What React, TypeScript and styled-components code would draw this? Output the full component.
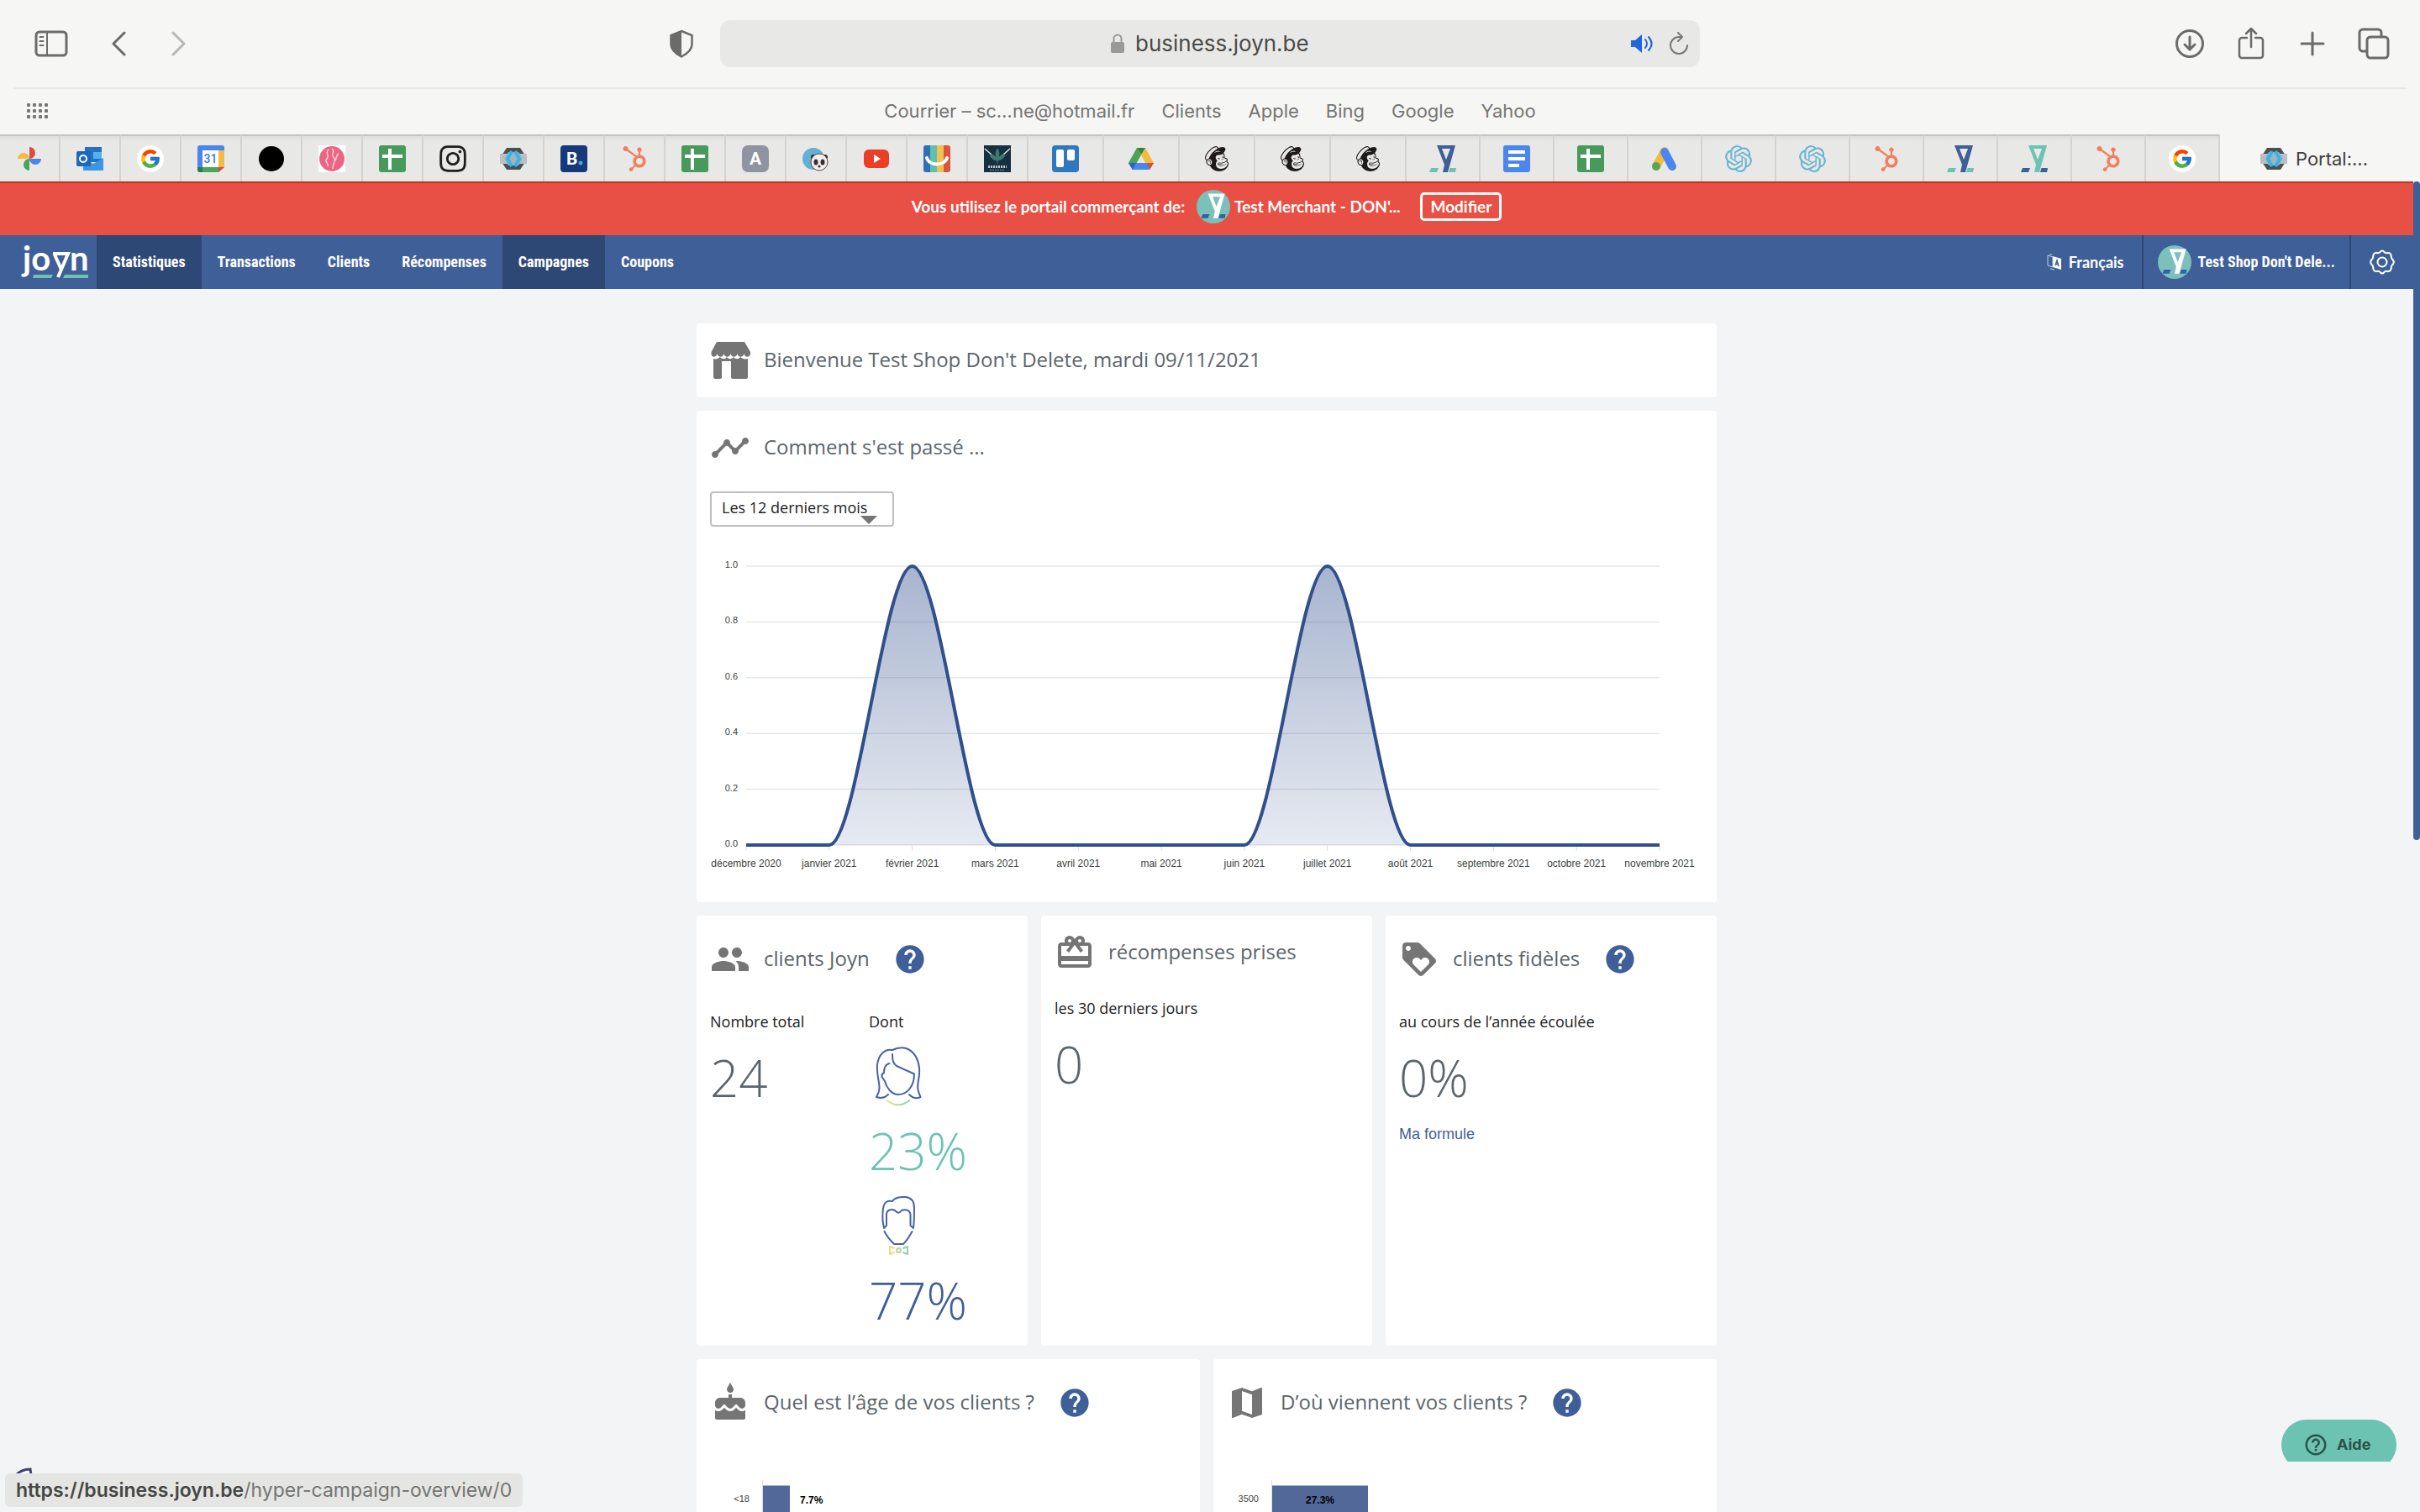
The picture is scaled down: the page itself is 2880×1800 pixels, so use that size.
import React from "react";
import styled, { createGlobalStyle } from "styled-components";
import { MdTimeline, MdPeople, MdCardGiftcard, MdLoyalty, MdCake, MdMap, MdHelp, MdHelpOutline } from "react-icons/md";
import { FaHubspot, FaMailchimp, FaInstagram } from "react-icons/fa";
import { FcGoogle } from "react-icons/fc";
import { SiOpenai } from "react-icons/si";

const color = {
  chrome: "#f6f6f4",
  chromeDark: "#e8e8e6",
  chromeIcon: "#6b6b69",
  blue: "#3f5f98",
  blueDark: "#2e4876",
  red: "#e85045",
  teal: "#6cc3b1",
  page: "#f3f4f6",
  grey: "#757575",
  title: "#5c656b",
  text: "#212121",
};

const font = {
  ui: 'Inter, "Liberation Sans", sans-serif',
  nav: '"Liberation Sans Narrow", "Roboto Condensed", "Liberation Sans", sans-serif',
  lato: 'Lato, "Liberation Sans", sans-serif',
  body: '"Open Sans", "Noto Sans", sans-serif',
  chart: '"Liberation Sans", Arial, sans-serif',
};

const Global = createGlobalStyle`
  *, *::before, *::after { box-sizing: border-box; }
  body { margin: 0; overflow: hidden; background: ${color.page}; font-family: ${font.body}; }
  h1, h2, p { margin: 0; font-weight: 400; }
  button { font: inherit; color: inherit; border: 0; padding: 0; background: none; cursor: pointer; }
  a { color: inherit; text-decoration: none; }
  svg { display: block; flex: none; }
`;

const Window = styled.div`
  height: 100vh;
  display: flex;
  flex-direction: column;
  overflow: hidden;
`;

/* ---------- browser chrome ---------- */

const Toolbar = styled.header`
  display: grid;
  grid-template-columns: minmax(0, 1fr) minmax(0, 1166px) minmax(0, 1fr);
  align-items: center;
  height: 104px;
  flex: none;
  background: ${color.chrome};
  color: ${color.chromeIcon};
`;

const ToolbarSide = styled.div<{ $end?: boolean }>`
  display: flex;
  align-items: center;
  gap: ${(p) => (p.$end ? 33 : 32)}px;
  justify-content: ${(p) => (p.$end ? "flex-end" : "flex-start")};
  padding: ${(p) => (p.$end ? "0 35px 0 0" : "0 26px 0 41px")};
`;

const ToolButton = styled.button<{ $faded?: boolean; $push?: boolean }>`
  width: 40px;
  height: 40px;
  display: grid;
  place-items: center;
  opacity: ${(p) => (p.$faded ? 0.45 : 1)};
  margin-left: ${(p) => (p.$push ? "auto" : "0")};
`;

const HistoryButtons = styled.div`
  display: flex;
  gap: 32px;
  padding-left: 8px;
`;

const AddressBar = styled.div`
  display: grid;
  grid-template-columns: 1fr auto 1fr;
  align-items: center;
  height: 56px;
  border-radius: 12px;
  background: ${color.chromeDark};
`;

const AddressLabel = styled.label`
  grid-column: 2;
  display: flex;
  align-items: center;
  gap: 12px;
  color: #999997;
`;

const AddressInput = styled.input`
  width: 208px;
  border: 0;
  padding: 0;
  background: none;
  font: 400 26px/32px ${font.ui};
  color: #4a4a48;
  outline: none;
`;

const AddressTools = styled.div`
  display: flex;
  justify-content: flex-end;
  align-items: center;
  gap: 18px;
  padding-right: 13px;
`;

const Bookmarks = styled.nav`
  display: grid;
  grid-template-columns: 1fr auto 1fr;
  align-items: center;
  height: 56px;
  flex: none;
  padding: 0 16px;
  background: linear-gradient(#e8e8e7, #e8e8e7) center top / calc(100% - 32px) 2px no-repeat ${color.chrome};
`;

const BookmarkList = styled.div`
  display: flex;
  gap: 32px;
  font: 400 22px/28px ${font.ui};
  color: #757573;
`;

const DotsButton = styled.button`
  justify-self: start;
  padding: 8px 16px;
`;

const TabStrip = styled.div`
  display: flex;
  height: 56px;
  flex: none;
  background: ${color.chrome};
`;

const Tab = styled.button<{ $width: number }>`
  flex: 0 1 ${(p) => p.$width}px;
  display: grid;
  place-items: center;
  border-right: 2px solid #d3d3d1;
  border-top: 2px solid #c4c5c3;
  background: linear-gradient(#dededc, ${color.chromeDark} 6px);
`;

const ActiveTab = styled.button`
  flex: 1 1 0;
  display: flex;
  align-items: center;
  justify-content: center;
  gap: 10px;
  padding: 2px 14px 0 0;
  font: 400 22px/28px ${font.ui};
  color: #3f3f3e;
`;

/* ---------- portal ---------- */

const Viewport = styled.div`
  flex: 1;
  min-height: 0;
  display: flex;
`;

const Portal = styled.div`
  flex: 1;
  min-width: 0;
  display: flex;
  flex-direction: column;
`;

const ScrollTrack = styled.div`
  width: 8px;
  flex: none;
  background: ${color.page};
`;

const ScrollThumb = styled.div`
  height: 49.5%;
  border-radius: 4px;
  background: ${color.blue};
`;

const Banner = styled.div`
  display: flex;
  align-items: center;
  justify-content: center;
  height: 64px;
  flex: none;
  padding-bottom: 6px;
  border-top: 2px solid #c5301f;
  background: ${color.red};
  color: #fff;
  font: 700 19px/24px ${font.lato};
`;

const BannerMerchant = styled.div`
  display: flex;
  align-items: center;
  gap: 5px;
  margin: 0 24px 0 14px;
`;

const EditButton = styled.button`
  height: 34px;
  padding: 0 9px;
  border: 3px solid #fff;
  border-radius: 5px;
`;

const NavBar = styled.nav`
  display: flex;
  align-items: stretch;
  height: 64px;
  flex: none;
  background: ${color.blue};
  color: #fff;
`;

const Brand = styled.a`
  display: flex;
  align-items: center;
  padding: 0 10px 0 25px;
`;

const NavLink = styled.a<{ $active?: boolean }>`
  display: flex;
  align-items: center;
  padding: 0 19px;
  font: 700 18px/24px ${font.nav};
  background: ${(p) => (p.$active ? color.blueDark : "transparent")};
`;

const NavEnd = styled.div`
  display: flex;
  margin-left: auto;
`;

const NavAction = styled.button<{ $divided?: boolean; $narrow?: boolean }>`
  display: flex;
  align-items: center;
  gap: 8px;
  padding: 0 ${(p) => (p.$narrow ? 17 : 21)}px;
  border-left: ${(p) => (p.$divided ? `2px solid ${color.blueDark}` : "0")};
  font: 700 18px/24px ${(p) => (p.$narrow ? font.nav : font.lato)};
`;

const Main = styled.main`
  flex: 1;
  min-height: 0;
  overflow: hidden;
  padding: 41px 16px 0;
`;

const Dashboard = styled.div`
  display: flex;
  flex-direction: column;
  gap: 16px;
  max-width: 1214px;
  margin: 0 auto;
`;

const CardRow = styled.div<{ $columns: number }>`
  display: grid;
  grid-template-columns: repeat(${(p) => p.$columns}, minmax(0, 1fr));
  gap: 16px;
`;

const Card = styled.section`
  padding: 20px 16px;
  border-radius: 4px;
  background: #fff;
`;

const CardHeader = styled.div<{ $tall?: boolean }>`
  display: flex;
  align-items: center;
  gap: 16px;
  height: ${(p) => (p.$tall ? 64 : 48)}px;
  color: ${color.grey};
`;

const CardTitle = styled.h2`
  padding-bottom: 2px;
  font: 400 24px/32px ${font.body};
  color: ${color.title};
`;

const HelpButton = styled.button`
  margin-left: 12px;
  color: ${color.blue};
`;

const PeriodField = styled.label`
  position: relative;
  display: block;
  width: 219px;
  margin: 28px 0 16px;
`;

const PeriodSelect = styled.select`
  appearance: none;
  display: block;
  width: 100%;
  height: 42px;
  padding: 0 12px 4px;
  border: 2px solid #bfbfbf;
  border-radius: 4px;
  background: #fff;
  font: 400 18px/24px ${font.body};
  color: ${color.text};
`;

const PeriodArrow = styled.span`
  position: absolute;
  right: 20px;
  bottom: 3px;
  border: 10px solid transparent;
  border-bottom: 0;
  border-top-color: ${color.grey};
  pointer-events: none;
`;

const StatGrid = styled.div`
  display: grid;
  grid-template-columns: 1fr 1fr;
  gap: 16px;
`;

const StatLabel = styled.p`
  margin-top: 30px;
  font: 400 18px/24px ${font.body};
  color: ${color.text};
`;

const StatValue = styled.p<{ $color?: string }>`
  font: 300 60px/72px ${font.body};
  color: ${(p) => p.$color || color.title};
`;

const BigStat = styled(StatValue)`
  margin-top: 19px;
`;

const GenderStat = styled.div`
  height: 178px;
`;

const GenderValue = styled(StatValue)`
  margin-top: 17px;
`;

const GenderList = styled.div`
  height: 354px;
  padding-top: 18px;
`;

const FormulaLink = styled.a`
  display: inline-block;
  margin-top: 19px;
  font: 400 18px/24px ${font.chart};
  color: ${color.blue};
`;

const BarChart = styled.div<{ $axis: number }>`
  display: grid;
  grid-template-columns: ${(p) => p.$axis}px 1fr;
  height: 160px;
  margin-top: 60px;
`;

const BarName = styled.span`
  padding: 14px 15px 0 0;
  text-align: right;
  font: 400 11px/16px ${font.chart};
  color: #444;
`;

const BarArea = styled.div`
  display: flex;
  align-items: flex-start;
  padding-top: 6px;
  border-left: 1px solid #dcdde0;
  font: 700 12px/16px ${font.chart};
  color: #000;
`;

const Bar = styled.div<{ $width: number }>`
  width: ${(p) => p.$width}px;
  height: 60px;
  padding-top: 9px;
  text-align: center;
  border-top: 1px solid #a9b4cf;
  background: #516899;
`;

const BarValue = styled.span`
  padding: 10px 0 0 12px;
`;

const StatusBubble = styled.div`
  position: fixed;
  left: 6px;
  bottom: 6px;
  padding: 4px 13px;
  border-radius: 6px;
  background: #e5e6e4;
  font: 400 23px/32px ${font.ui};
  color: #737472;
  strong { font-weight: 600; color: #454745; }
`;

const StrokeHint = styled.svg`
  position: fixed;
  left: 16px;
  bottom: 44px;
`;

const HelpClip = styled.div`
  position: fixed;
  right: 28px;
  bottom: 60px;
  height: 50px;
  overflow: hidden;
`;

const HelpWidget = styled.button`
  display: flex;
  align-items: center;
  gap: 10px;
  width: 137px;
  height: 60px;
  padding: 0 0 0 26px;
  border-radius: 30px;
  background: ${color.teal};
  font: 700 18px/24px ${font.ui};
  color: #2b5249;
`;

/* ---------- drawings ---------- */

const Mark = ({ size = 32, main = color.blue, dash = color.teal, disc = "" }: { size?: number; main?: string; dash?: string; disc?: string }) => (
  <svg width={size} height={size} viewBox={disc ? "-6 -5 44 44" : "0 0 32 32"}>
    {disc && <circle cx="16" cy="17" r="22" fill={disc} />}
    <path fill={main} fillRule="evenodd" d="M9 0H31L22 32H16L18 23ZM15 4L20 17L25 4Z" />
    <path fill={dash} d="M2 27H11L9 32H0ZM24.500 27H32L31 32H23Z" />
  </svg>
);

const Sheets = () => (
  <svg width="32" height="32" viewBox="0 0 32 32">
    <rect width="32" height="32" rx="3" fill="#48995c" />
    <path d="M13 4v25M4 13h24" stroke="#fff" strokeWidth="4" />
  </svg>
);

const Hex = () => (
  <svg width="32" height="32" viewBox="0 0 32 32">
    <path d="M8 3H24L30 12V20L24 29H8L2 20V12Z" fill="#4b4f52" />
    <rect x="0" y="10" width="32" height="12" fill="#b9c0c4" />
    <path d="M10 8H22L27 16L22 24H10L5 16Z" fill="#9fb4bf" />
    <path d="M14 7L9 16L14 25M18 7L23 16L18 25" stroke="#38b5e6" strokeWidth="4" fill="none" />
  </svg>
);

const Photos = () => (
  <svg width="32" height="32" viewBox="0 0 32 32">
    <path d="M16 2a7 7 0 0 1 0 14Z" fill="#dd4b3e" />
    <path d="M30 16a7 7 0 0 1-14 0Z" fill="#4a86ee" />
    <path d="M16 30a7 7 0 0 1 0-14Z" fill="#4aa45a" />
    <path d="M2 16a7 7 0 0 1 14 0Z" fill="#f3bb41" />
  </svg>
);

const Outlook = () => (
  <svg width="32" height="32" viewBox="0 0 32 32">
    <path d="M10 2h20v18H10z" fill="#2a6fc0" />
    <path d="M20 8h10v8H20z" fill="#4fb4ee" />
    <path d="M8 15l12 7 12-7v15H8z" fill="#3b96e4" />
    <rect y="7" width="17" height="18" rx="2" fill="#1d67bd" />
    <circle cx="8" cy="16" r="4" stroke="#fff" strokeWidth="2" fill="none" />
  </svg>
);

const Google = () => (
  <svg width="32" height="32" viewBox="0 0 32 32">
    <circle cx="16" cy="16" r="16" fill="#fff" />
    <FcGoogle x="3" y="3" size={26} />
  </svg>
);

const Calendar = () => (
  <svg width="32" height="32" viewBox="0 0 32 32">
    <rect width="32" height="32" rx="3" fill="#4a86ee" />
    <path d="M25 6h7v20h-7z" fill="#f3bb41" />
    <path d="M6 26h19v6H9a3 3 0 0 1-3-3z" fill="#4aa45a" />
    <path d="M0 26h6v6H3a3 3 0 0 1-3-3z" fill="#2f7d45" />
    <path d="M32 26v6h-7z" fill="#e8e8e6" />
    <path d="M25 26h7l-7 6z" fill="#dd4b3e" />
    <rect x="6" y="6" width="19" height="20" fill="#fff" />
    <text x="15.500" y="21" textAnchor="middle" fontFamily="Roboto" fontSize="14" fontWeight="500" fill="#3f7ae0">31</text>
  </svg>
);

const Disc = () => (
  <svg width="32" height="32" viewBox="0 0 32 32"><circle cx="16" cy="16" r="15" /></svg>
);

const PinkBrain = () => (
  <svg width="32" height="32" viewBox="0 0 32 32">
    <rect width="32" height="32" fill="#fff" />
    <circle cx="16" cy="16" r="15" fill="#ec6683" />
    <path d="M12 5c-5 5 2 7-2 11s3 5 1 9M16 4c5 4-2 6 2 10s-1 6-1 14M24 10c-4 2-1 5-5 9" stroke="#fbd0d9" strokeWidth="1.500" fill="none" />
  </svg>
);

const Letter = ({ bg, label, dot }: { bg: string; label: string; dot?: boolean }) => (
  <svg width="32" height="32" viewBox="0 0 32 32">
    <rect width="32" height="32" rx={dot ? 4 : 7} fill={bg} />
    <text x={dot ? 7 : 16} y="23" textAnchor={dot ? "start" : "middle"} fontFamily="Roboto" fontWeight="700" fontSize="21" fill="#fff">{label}</text>
    {dot && <circle cx="24" cy="21" r="2.500" fill="#4d9fe0" />}
  </svg>
);

const Panda = () => (
  <svg width="32" height="32" viewBox="0 0 32 32">
    <circle cx="13" cy="16" r="13" fill="#63b0d2" />
    <circle cx="13" cy="14" r="3" fill="#3c2c30" />
    <circle cx="27" cy="14" r="3" fill="#3c2c30" />
    <circle cx="20" cy="20" r="10" fill="#f3eeee" stroke="#5c4a4e" strokeWidth="1" />
    <ellipse cx="16" cy="20" rx="2.500" ry="3.500" fill="#3c2c30" />
    <ellipse cx="24" cy="20" rx="2.500" ry="3.500" fill="#3c2c30" />
    <circle cx="20" cy="25" r="1.500" fill="#3c2c30" />
  </svg>
);

const Youtube = () => (
  <svg width="32" height="32" viewBox="0 0 32 32">
    <rect x="1" y="5" width="30" height="22" rx="6" fill="#ea3e26" />
    <path d="M13 11l8 5-8 5z" fill="#fff" />
  </svg>
);

const Smile = () => (
  <svg width="32" height="32" viewBox="0 0 32 32">
    <path d="M3 0h5v32H3a3 3 0 0 1-3-3V3a3 3 0 0 1 3-3z" fill="#2f6fb4" />
    <path d="M8 0h8v32H8z" fill="#62bfae" />
    <path d="M16 0h8v32h-8z" fill="#efc254" />
    <path d="M24 0h5a3 3 0 0 1 3 3v26a3 3 0 0 1-3 3h-5z" fill="#d9553c" />
    <path d="M4 15c3 10 21 10 24 0" stroke="#fff" strokeWidth="4" fill="none" strokeLinecap="round" />
  </svg>
);

const Leaf = () => (
  <svg width="32" height="32" viewBox="0 0 32 32">
    <rect width="32" height="32" fill="#16303f" />
    <path d="M1 4l9 8M31 4l-9 8" stroke="#dfe5e8" strokeWidth="1.500" />
    <path d="M16 4c3 5 2 9 0 13c-2-4-3-8 0-13zM16 18C12 18 8 15 7 11c5 0 8 3 9 7zM16 18c4 0 8-3 9-7c-5 0-8 3-9 7zM16 22v-5" fill="#3f7a72" stroke="#3f7a72" />
    <path d="M5 25.500h22" stroke="#b9c5cb" strokeWidth="3" strokeDasharray="2 1" />
    <path d="M7 29.500h18" stroke="#4f6873" strokeWidth="2" strokeDasharray="2 1" />
  </svg>
);

const Trello = () => (
  <svg width="32" height="32" viewBox="0 0 32 32">
    <rect width="32" height="32" rx="4" fill="#2f78bd" />
    <rect x="5" y="5" width="9" height="21" rx="2" fill="#fff" />
    <rect x="18" y="5" width="9" height="13" rx="2" fill="#fff" />
  </svg>
);

const Drive = () => (
  <svg width="32" height="32" viewBox="0 0 32 32">
    <path d="M11 3h10l-5 9-10 17-5-8z" fill="#4aa45a" />
    <path d="M11 3h10l10 18H21z" fill="#f3bb41" />
    <path d="M11 3h10l-5 8z" fill="#2f8540" />
    <path d="M1 21h30l-5 8H6z" fill="#4a86ee" />
    <path d="M23 21h8l-5 8z" fill="#dd4b3e" />
    <path d="M1 21h9l-4 8z" fill="#2f62c8" />
    <path d="M16 12l5 9H11z" fill="#e8e8e6" />
  </svg>
);

const Docs = () => (
  <svg width="32" height="32" viewBox="0 0 32 32">
    <rect width="32" height="32" rx="3" fill="#4a86ee" />
    <path d="M6 8h20M6 16h20M6 24h13" stroke="#fff" strokeWidth="4" />
  </svg>
);

const Ads = () => (
  <svg width="32" height="32" viewBox="0 0 32 32">
    <path d="M16 7L6 25" stroke="#f3bb41" strokeWidth="10" strokeLinecap="round" />
    <path d="M16 8l9 17" stroke="#4a86ee" strokeWidth="10" strokeLinecap="round" />
    <circle cx="6" cy="25" r="5" fill="#58a55c" />
  </svg>
);

const Hubspot = () => <FaHubspot size={30} color="#ef8060" />;
const Monkey = () => <FaMailchimp size={34} color="#1d1a17" />;
const Blossom = () => <SiOpenai size={32} color="#69b5d4" />;
const Insta = () => <FaInstagram size={36} color="#1f1f1f" />;

const Storefront = () => (
  <svg width="48" height="48" viewBox="0 0 48 48" fill={color.grey}>
    <path d="M8 2H41L48 14V16c0 5-7 5-7.500 0c-1 5-7 5-8 0c-1 5-7 5-8 0c-1 5-7 5-8 0c-1 5-7 5-8 0c-1 5-7 5-7 0V14Z" />
    <path d="M4 22c3 1 6 0 8-2c2 3 6 3 8 0c2 3 6 3 8 0c2 3 6 3 8 0c2 2 6 3 9 2V44a2 2 0 0 1-2 2H27a2 2 0 0 1-2-2V25H14V44a2 2 0 0 1-2 2H6a2 2 0 0 1-2-2Z" />
  </svg>
);

const Woman = () => (
  <svg width="70" height="71" viewBox="0 0 70 71" fill="none" stroke="#4862a8" strokeWidth="2" strokeLinecap="round" strokeLinejoin="round">
    <defs><linearGradient id="necklace"><stop offset="0" stopColor="#ebe38b" /><stop offset="1" stopColor="#94cfae" /></linearGradient></defs>
    <path d="M28 4C40 -2 50 2 56 12C61 21 61 30 59 40C57 50 59 54 61.500 60C56 63 51 60 48 57M28 4C19 2 11 10 10 22C9 34 13 42 12.500 50C12 55 10 58 9 60C15 62 20 60 23 57" />
    <path d="M28 9C28 17 29 20 33 23L54 32.500C54 48 45 57 35 57C27 57 21 49 19 41L15.500 36C15 33 16 32 18 31C18 25 20 21 24.500 20" />
    <path d="M21.500 64C30 71 40 71 48 64" stroke="url(#necklace)" />
  </svg>
);

const Man = () => (
  <svg width="70" height="71" viewBox="0 0 70 71" fill="none" stroke="#4862a8" strokeWidth="2" strokeLinecap="round" strokeLinejoin="round">
    <path d="M18 38C16 30 16 22 17 15C18 6 23 5 28 6C32 0 40 1 44 1C52 2 54 7 54 14C54 24 54 30 53 38L49.500 35V22C49 15 41 16 39 17C36 21 34 20 31 17C27 15 21 16 21 22V35Z" />
    <path d="M18.500 42C22 49 26 53 30 57H41C46 52 48 48 51.500 42" />
    <path d="M30 62L25 60V69L30 67" stroke="#e4df86" />
    <circle cx="35.500" cy="64.500" r="2.500" stroke="#b9d49a" />
    <path d="M41 62L46 60V69L41 67" stroke="#98d0ae" />
  </svg>
);

/* ---------- data ---------- */

const tabs: { width: number; icons: React.FC[] }[] = [
  { width: 72, icons: [Photos, Outlook, Google, Calendar, Disc, PinkBrain, Sheets, Insta, Hex, () => <Letter bg="#15397a" label="B" dot />, Hubspot, Sheets, () => <Letter bg="#9093a0" label="A" />, Panda, Youtube, Smile, Leaf] },
  { width: 90, icons: [Trello, Drive, Monkey, Monkey, Monkey] },
  { width: 88, icons: [() => <Mark />, Docs, Sheets, Ads, Blossom, Blossom, Hubspot, () => <Mark />, () => <Mark main={color.teal} dash={color.blue} />, Hubspot, Google] },
];

const bookmarks = ["Courrier – sc…ne@hotmail.fr", "Clients", "Apple", "Bing", "Google", "Yahoo"];

const links = [
  { name: "Statistiques", active: true },
  { name: "Transactions" },
  { name: "Clients" },
  { name: "Récompenses" },
  { name: "Campagnes", active: true },
  { name: "Coupons" },
];

const visits = [
  ["décembre 2020", 0], ["janvier 2021", 0], ["février 2021", 1], ["mars 2021", 0], ["avril 2021", 0], ["mai 2021", 0],
  ["juin 2021", 0], ["juillet 2021", 1], ["août 2021", 0], ["septembre 2021", 0], ["octobre 2021", 0], ["novembre 2021", 0],
] as [string, number][];

const VisitsChart = () => {
  const left = 43;
  const right = 1130;
  const base = 363;
  const top = 31;
  const step = (right - left) / (visits.length - 1);
  const px = (i: number) => left + i * step;
  const py = (v: number) => base - v * (base - top);
  const line = visits
    .map(([, v], i) => (i === 0 ? `M${px(0)} ${py(v)}` : `C${px(i - 1) + step / 3} ${py(visits[i - 1][1])} ${px(i) - step / 3} ${py(v)} ${px(i)} ${py(v)}`))
    .join("");
  return (
    <svg width="100%" viewBox="0 0 1182 411" fontFamily={font.chart} fontSize="11" fill="#3c3f42">
      <defs>
        <linearGradient id="area" x1="0" y1={top} x2="0" y2={base} gradientUnits="userSpaceOnUse">
          <stop offset="0" stopColor="#304f8c" stopOpacity="0.42" />
          <stop offset="1" stopColor="#304f8c" stopOpacity="0.12" />
        </linearGradient>
      </defs>
      {[0, 0.2, 0.4, 0.6, 0.8, 1].map((v) => (
        <g key={v}>
          <path d={`M${left} ${py(v)}H${right}`} stroke="#e6e7e8" strokeWidth="1.500" />
          <text x="33" y={py(v) + 2} textAnchor="end">{v.toFixed(1)}</text>
        </g>
      ))}
      {visits.map(([name], i) => (
        <g key={name}>
          <path d={`M${px(i)} ${base}v7`} stroke="#dcdddf" />
          <text x={px(i)} y={base + 26} textAnchor="middle" fontSize="12">{name}</text>
        </g>
      ))}
      <path d={`${line}V${base}H${left}Z`} fill="url(#area)" />
      <path d={line} fill="none" stroke="#304f8c" strokeWidth="4" />
    </svg>
  );
};

const Help = () => (
  <HelpButton aria-label="Aide"><MdHelp size={40} /></HelpButton>
);

const stroke = { fill: "none", stroke: "currentColor", strokeWidth: 3, strokeLinecap: "round" as const, strokeLinejoin: "round" as const };

export default function App() {
  return (
    <Window>
      <Global />
      <Toolbar>
        <ToolbarSide>
          <ToolButton aria-label="Barre latérale">
            <svg width="40" height="32" viewBox="0 0 40 32" {...stroke}><rect x="2" y="2" width="36" height="28" rx="4" /><path d="M15 2v28M6.500 8h4M6.500 13h4M6.500 18h4" strokeWidth="2" /></svg>
          </ToolButton>
          <HistoryButtons>
            <ToolButton aria-label="Précédent">
              <svg width="18" height="30" viewBox="0 0 18 30" {...stroke}><path d="M16 2L3 15l13 13" /></svg>
            </ToolButton>
            <ToolButton aria-label="Suivant" $faded>
              <svg width="18" height="30" viewBox="0 0 18 30" {...stroke}><path d="M2 2l13 13L2 28" /></svg>
            </ToolButton>
          </HistoryButtons>
          <ToolButton aria-label="Confidentialité" $push>
            <svg width="30" height="34" viewBox="0 0 30 34"><path d="M15 2L27.500 7V18c0 7-6 11-12.500 14.500C8.500 29 2.500 25 2.500 18V7Z" fill="none" stroke="currentColor" strokeWidth="2.500" /><path d="M15 2v30.500C8.500 29 2.500 25 2.500 18V7Z" fill="currentColor" /></svg>
          </ToolButton>
        </ToolbarSide>
        <AddressBar>
          <AddressLabel>
            <svg width="18" height="24" viewBox="0 0 18 24"><rect x="1" y="10" width="16" height="13" rx="2" fill="currentColor" /><path d="M4.500 11V6a4.500 4.500 0 0 1 9 0v5" fill="none" stroke="currentColor" strokeWidth="2" /></svg>
            <AddressInput aria-label="Adresse" defaultValue="business.joyn.be" />
          </AddressLabel>
          <AddressTools>
            <button aria-label="Couper le son">
              <svg width="28" height="24" viewBox="0 0 28 24"><path d="M1 8h5l8-7v22l-8-7H1z" fill="#1f64e0" /><path d="M18 7q4 5 0 10M22 4q7 8 0 16" fill="none" stroke="#1f64e0" strokeWidth="2" strokeLinecap="round" /></svg>
            </button>
            <button aria-label="Actualiser">
              <svg width="24" height="28" viewBox="0 0 24 28" fill="none" stroke="#777775" strokeWidth="2" strokeLinecap="round" strokeLinejoin="round"><path d="M22 16a10 10 0 1 1-10-10h4M11 1l5 5-5 5" /></svg>
            </button>
          </AddressTools>
        </AddressBar>
        <ToolbarSide $end>
          <ToolButton aria-label="Téléchargements">
            <svg width="36" height="36" viewBox="0 0 36 36" {...stroke}><circle cx="18" cy="18" r="15.500" /><path d="M18 10v15M12 19l6 6 6-6" /></svg>
          </ToolButton>
          <ToolButton aria-label="Partager">
            <svg width="32" height="40" viewBox="0 0 32 40" {...stroke}><path d="M11 13H5a3 3 0 0 0-3 3V34a3 3 0 0 0 3 3H27a3 3 0 0 0 3-3V16a3 3 0 0 0-3-3H21M16 24V3M10 8l6-6 6 6" strokeWidth="2.500" /></svg>
          </ToolButton>
          <ToolButton aria-label="Nouvel onglet">
            <svg width="30" height="30" viewBox="0 0 30 30" {...stroke}><path d="M15 2v26M2 15h26" /></svg>
          </ToolButton>
          <ToolButton aria-label="Onglets">
            <svg width="38" height="38" viewBox="0 0 38 38" {...stroke}><rect x="11" y="11" width="25" height="25" rx="4" /><path d="M10 28H6a4 4 0 0 1-4-4V6a4 4 0 0 1 4-4H24a4 4 0 0 1 4 4v4" /></svg>
          </ToolButton>
        </ToolbarSide>
      </Toolbar>

      <Bookmarks>
        <DotsButton aria-label="Favoris">
          <svg width="26" height="18" viewBox="0 0 26 18" fill="#767674">
            {[0, 7, 14].map((y) => [0, 7, 14, 21].map((x) => <rect key={`${x}-${y}`} x={x} y={y} width="4" height="4" rx="1" />))}
          </svg>
        </DotsButton>
        <BookmarkList>{bookmarks.map((b) => <a key={b} href="#">{b}</a>)}</BookmarkList>
      </Bookmarks>

      <TabStrip>
        {tabs.map((group) => group.icons.map((Icon, i) => (
          <Tab key={`${group.width}-${i}`} $width={group.width} aria-label={`Onglet ${i + 1}`}><Icon /></Tab>
        )))}
        <ActiveTab><Hex />Portal:...</ActiveTab>
      </TabStrip>

      <Viewport>
        <Portal>
          <Banner>
            Vous utilisez le portail commerçant de:
            <BannerMerchant><Mark size={40} main="#fff" disc="#7cc0ba" dash="#2f62a8" />Test Merchant - DON'...</BannerMerchant>
            <EditButton>Modifier</EditButton>
          </Banner>
          <NavBar>
            <Brand href="#" aria-label="joyn">
              <svg width="80" height="64" viewBox="0 0 80 64" fill="#fff" fontFamily="Lato" fontWeight="700" fontSize="40">
                <text x="2" y="42">jo</text>
                <text x="58" y="42">n</text>
                <path d="M38 22H56L44 50M39.500 22L48 41" fill="none" stroke="#fff" strokeWidth="4" />
                <path d="M15 47H38L36 51H14ZM52 47H80V51H50Z" fill={color.teal} />
              </svg>
            </Brand>
            {links.map((l) => <NavLink key={l.name} href="#" $active={l.active}>{l.name}</NavLink>)}
            <NavEnd>
              <NavAction>
                <svg width="18" height="20" viewBox="0 0 18 20"><path d="M7 3l10 3v13l-10-3z" fill="#fff" /><path d="M1 2l6 2v12l-6-2zM3 1h3M4 18l5 1" fill="none" stroke="#c5d0e4" /><path d="M10 14l2-6 2 7M10.500 12l3 1" stroke={color.blue} strokeWidth="1.500" fill="none" /></svg>
                Français
              </NavAction>
              <NavAction $divided $narrow><Mark size={40} main="#fff" disc="#7cc0ba" dash="#2f62a8" />Test Shop Don't Dele...</NavAction>
              <NavAction $divided aria-label="Paramètres">
                <svg width="32" height="32" viewBox="0 0 32 32" fill="none" stroke="#fff" strokeWidth="2" strokeLinejoin="round"><circle cx="16" cy="16" r="5.500" /><path d="M13.500 4Q16 1 18.500 4Q20 6 22.500 4.800Q26.500 5 26.800 9Q26.500 11.500 28.500 13Q31 16 28.500 19Q26.500 20.500 26.800 23Q26.500 27 22.500 27.200Q20 26 18.500 28Q16 31 13.500 28Q12 26 9.500 27.200Q5.500 27 5.200 23Q5.500 20.500 3.500 19Q1 16 3.500 13Q5.500 11.500 5.200 9Q5.500 5 9.500 4.800Q12 6 13.500 4Z" /></svg>
              </NavAction>
            </NavEnd>
          </NavBar>

          <Main>
            <Dashboard>
              <Card>
                <CardHeader><Storefront /><CardTitle as="h1">Bienvenue Test Shop Don't Delete, mardi 09/11/2021</CardTitle></CardHeader>
              </Card>
              <Card>
                <CardHeader><MdTimeline size={48} /><CardTitle>Comment s'est passé ...</CardTitle></CardHeader>
                <PeriodField>
                  <PeriodSelect aria-label="Période"><option>Les 12 derniers mois</option></PeriodSelect>
                  <PeriodArrow />
                </PeriodField>
                <VisitsChart />
              </Card>
              <CardRow $columns={3}>
                <Card>
                  <CardHeader $tall><MdPeople size={48} /><CardTitle>clients Joyn</CardTitle><Help /></CardHeader>
                  <StatGrid>
                    <div><StatLabel>Nombre total</StatLabel><BigStat>24</BigStat></div>
                    <div>
                      <StatLabel>Dont</StatLabel>
                      <GenderList>
                        <GenderStat><Woman /><GenderValue $color={color.teal}>23%</GenderValue></GenderStat>
                        <GenderStat><Man /><GenderValue $color={color.blue}>77%</GenderValue></GenderStat>
                      </GenderList>
                    </div>
                  </StatGrid>
                </Card>
                <Card>
                  <CardHeader><MdCardGiftcard size={48} /><CardTitle>récompenses prises</CardTitle></CardHeader>
                  <StatLabel>les 30 derniers jours</StatLabel>
                  <BigStat>0</BigStat>
                </Card>
                <Card>
                  <CardHeader $tall><MdLoyalty size={48} /><CardTitle>clients fidèles</CardTitle><Help /></CardHeader>
                  <StatLabel>au cours de l’année écoulée</StatLabel>
                  <BigStat>0%</BigStat>
                  <FormulaLink href="#">Ma formule</FormulaLink>
                </Card>
              </CardRow>
              <CardRow $columns={2}>
                <Card>
                  <CardHeader $tall><MdCake size={48} /><CardTitle>Quel est l’âge de vos clients ?</CardTitle><Help /></CardHeader>
                  <BarChart $axis={62}>
                    <BarName>&lt;18</BarName>
                    <BarArea><Bar $width={32} /><BarValue>7.7%</BarValue></BarArea>
                  </BarChart>
                </Card>
                <Card>
                  <CardHeader $tall><MdMap size={48} /><CardTitle>D’où viennent vos clients ?</CardTitle><Help /></CardHeader>
                  <BarChart $axis={53}>
                    <BarName>3500</BarName>
                    <BarArea><Bar $width={114}>27.3%</Bar></BarArea>
                  </BarChart>
                </Card>
              </CardRow>
            </Dashboard>
          </Main>
        </Portal>
        <ScrollTrack><ScrollThumb /></ScrollTrack>
      </Viewport>

      <StrokeHint width="24" height="10" viewBox="0 0 24 10"><path d="M3 10Q10 3 20 3L21 10" fill="#fff" stroke="#403f7d" strokeWidth="3" /></StrokeHint>
      <StatusBubble><strong>https://business.joyn.be</strong>/hyper-campaign-overview/0</StatusBubble>
      <HelpClip><HelpWidget><MdHelpOutline size={30} />Aide</HelpWidget></HelpClip>
    </Window>
  );
}
